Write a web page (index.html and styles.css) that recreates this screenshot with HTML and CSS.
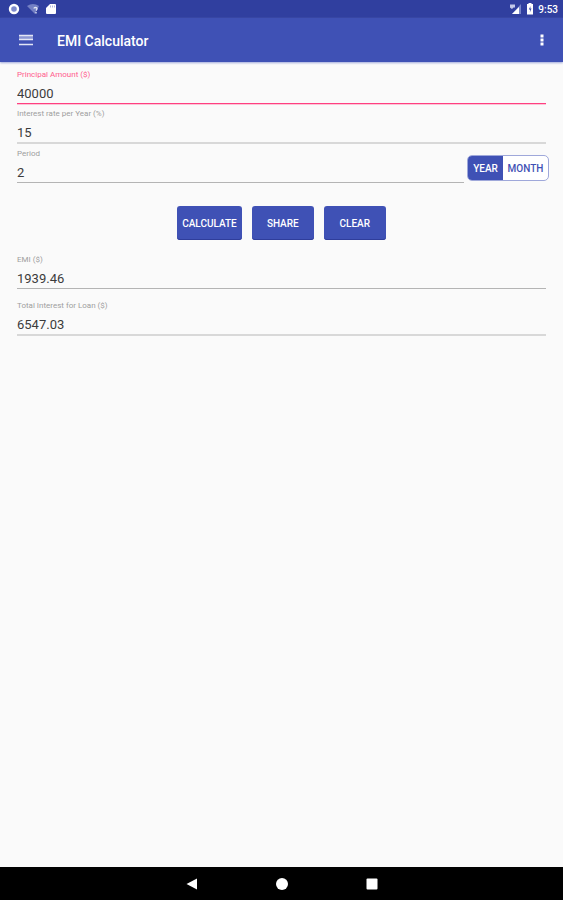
FILE: index.html
```html
<!DOCTYPE html>
<html lang="en">
<head>
<meta charset="utf-8">
<meta name="viewport" content="width=device-width, initial-scale=1">
<title>EMI Calculator</title>
<link rel="stylesheet" href="styles.css">
</head>
<body>
<div class="status-bar">
  <div class="status-group status-left">
    <svg width="12" height="12" viewBox="0 0 12 12" aria-hidden="true"><circle cx="6" cy="6" r="4" fill="#7f8bcd" stroke="#fff" stroke-width="2.4"/></svg>
    <svg width="12" height="12" viewBox="0 0 12 12" aria-hidden="true"><path d="M0 3Q6-1 12 3L8 11Z" fill="#7480c4"/><path d="M7 5.500q0-1 1.500-1T10 5.500Q10 6.500 9 7.500M9 9v1.500" fill="none" stroke="#e4e7f6" stroke-width="1.300"/></svg>
    <svg width="10" height="12" viewBox="0 0 10 12" aria-hidden="true"><path d="M4 1h5q1 0 1 1v8q0 1-1 1H1q-1 0-1-1V5Z" fill="#fff"/><path d="M4.500 2.500v2M6.500 2.500v2M8.500 2.500v2" stroke="#9ba5db" stroke-width=".8"/></svg>
  </div>
  <div class="status-group status-right">
    <svg width="13" height="12" viewBox="0 0 13 12" aria-hidden="true"><path d="M12 1v10H3Z" fill="#7784c9"/><path d="M10 4v7H3Z" fill="#fff"/><path d="M1 1.500h5v3H4.500L3 6 1 4.500Z" fill="#c3c9ea"/></svg>
    <svg width="8" height="12" viewBox="0 0 8 12" aria-hidden="true"><path d="M2.500 0h3v1H7v10.500H1V1h1.500Z" fill="#fff"/><path d="M4.600 3 2.800 6.500h1.400L3.800 9.500 5.500 5.600H4.200Z" fill="#303f9f"/></svg>
    <span>9:53</span>
  </div>
</div>
<header class="app-bar">
  <button class="icon-button" type="button" aria-label="Open menu">
    <svg width="14" height="12" viewBox="0 0 14 12" aria-hidden="true"><path d="M0 1h14v5H0Z" fill="#8b96d3"/><path d="M0 1.500h14M0 5.500h14M0 10.500h14" stroke="#e3e6f5" stroke-width="1.400"/></svg>
  </button>
  <h1>EMI Calculator</h1>
  <button class="icon-button" type="button" aria-label="More options">
    <svg width="4" height="12" viewBox="0 0 4 12" aria-hidden="true"><path d="M.5.500h3v3h-3ZM.5 4.500h3v3h-3ZM.5 8.500h3v3h-3Z" fill="#fff"/></svg>
  </button>
</header>
<main>
  <form class="inputs">
    <div class="field active">
      <label for="principal">Principal Amount ($)</label>
      <input id="principal" type="text" value="40000">
    </div>
    <div class="field thick">
      <label for="rate">Interest rate per Year (%)</label>
      <input id="rate" type="text" value="15">
    </div>
    <div class="period-row">
      <div class="field">
        <label for="period">Period</label>
        <input id="period" type="text" value="2">
      </div>
      <div class="toggle" role="group" aria-label="Period unit">
        <button class="selected" type="button" aria-pressed="true">YEAR</button>
        <button type="button" aria-pressed="false">MONTH</button>
      </div>
    </div>
    <div class="actions">
      <button type="button">CALCULATE</button>
      <button type="button">SHARE</button>
      <button type="button">CLEAR</button>
    </div>
  </form>
  <section class="results">
    <div class="field">
      <label for="emi">EMI ($)</label>
      <input id="emi" type="text" value="1939.46" readonly>
    </div>
    <div class="field thick">
      <label for="interest">Total Interest for Loan ($)</label>
      <input id="interest" type="text" value="6547.03" readonly>
    </div>
  </section>
</main>
<nav class="nav-bar">
  <button type="button" aria-label="Back"><svg width="12" height="12" viewBox="0 0 12 12" aria-hidden="true"><path d="M11 .500v11L.5 6Z" fill="#fff"/></svg></button>
  <button type="button" aria-label="Home"><svg width="12" height="12" viewBox="0 0 12 12" aria-hidden="true"><circle cx="6" cy="6" r="6" fill="#fff"/></svg></button>
  <button type="button" aria-label="Recent apps"><svg width="12" height="12" viewBox="0 0 12 12" aria-hidden="true"><rect x=".5" y=".5" width="11" height="11" rx="1" fill="#fff"/></svg></button>
</nav>
</body>
</html>
```
FILE: styles.css
```css
* {
  box-sizing: border-box;
}

body {
  margin: 0;
  min-height: 100vh;
  display: flex;
  flex-direction: column;
  background: #fafafa;
  color: #3c3c3c;
  font-family: Roboto, "Liberation Sans", sans-serif;
}

button {
  padding: 0;
  border: 0;
  background: none;
  font: inherit;
  color: inherit;
}

svg {
  display: block;
}

.status-bar {
  display: flex;
  justify-content: space-between;
  height: 18px;
  padding: 0 5px 0 8px;
  background: #303f9f;
  color: #fff;
  font-size: 10px;
  font-weight: 500;
}

.status-group {
  display: flex;
  align-items: center;
}

.status-left {
  gap: 7px;
}

.status-right {
  gap: 4px;
}

.app-bar {
  display: flex;
  align-items: center;
  height: 44px;
  padding: 0 11px;
  background: #3f51b5;
  color: #fff;
  box-shadow: 0 1px 2px #9fa8da;
}

.app-bar h1 {
  flex: 1;
  margin: 0 0 0 16px;
  padding-top: 1px;
  font-size: 14px;
  line-height: 20px;
  font-weight: 500;
}

.icon-button {
  display: flex;
  align-items: center;
  justify-content: center;
  width: 30px;
  height: 30px;
}

.app-bar .icon-button:last-child {
  width: 20px;
}

main {
  flex: 1;
  padding: 7px 17px;
}

.inputs {
  display: flex;
  flex-direction: column;
  gap: 4px;
}

.field {
  display: flex;
  flex-direction: column;
  gap: 2px;
  border-bottom: 1px solid #b4b4b4;
}

.field label {
  color: #9e9e9e;
  font-size: 8px;
  line-height: 12px;
}

.field input {
  width: 100%;
  height: 20px;
  padding: 1px 0 0;
  border: 0;
  outline: 0;
  background: transparent;
  color: #3c3c3c;
  font: 13px/19px Roboto, "Liberation Sans", sans-serif;
}

.field.thick {
  border-bottom: 2px solid #d8d8d8;
}

.field.active {
  border-bottom: 1px solid #ff4081;
  box-shadow: 0 1px #fcc4d6;
}

.field.active label {
  color: #ff5c8d;
}

.period-row {
  display: flex;
  gap: 3px;
  margin-right: -3px;
}

.period-row .field {
  flex: 1;
}

.toggle {
  display: flex;
  align-self: flex-end;
  height: 26px;
  margin-bottom: 2px;
  overflow: hidden;
  border: 1px solid #9fa8da;
  border-radius: 5px;
  background: #fff;
  color: #3f51b5;
  font-size: 10px;
  font-weight: 500;
}

.toggle button {
  width: 45px;
}

.toggle .selected {
  width: 35px;
  background: #3f51b5;
  color: #fff;
}

.actions {
  display: flex;
  justify-content: center;
  gap: 10px;
  margin-top: 19px;
}

.actions button {
  min-width: 62px;
  height: 34px;
  padding: 0 5px;
  border-radius: 3px;
  background: #3f51b5;
  box-shadow: inset 0 -1px #2f3d9b;
  color: #fff;
  font-size: 10px;
  font-weight: 500;
}

.results {
  display: flex;
  flex-direction: column;
  gap: 11px;
  margin-top: 14px;
}

.nav-bar {
  display: flex;
  align-items: center;
  justify-content: center;
  gap: 60px;
  height: 33px;
  background: #000;
}

.nav-bar button {
  display: flex;
  justify-content: center;
  width: 30px;
}
```
